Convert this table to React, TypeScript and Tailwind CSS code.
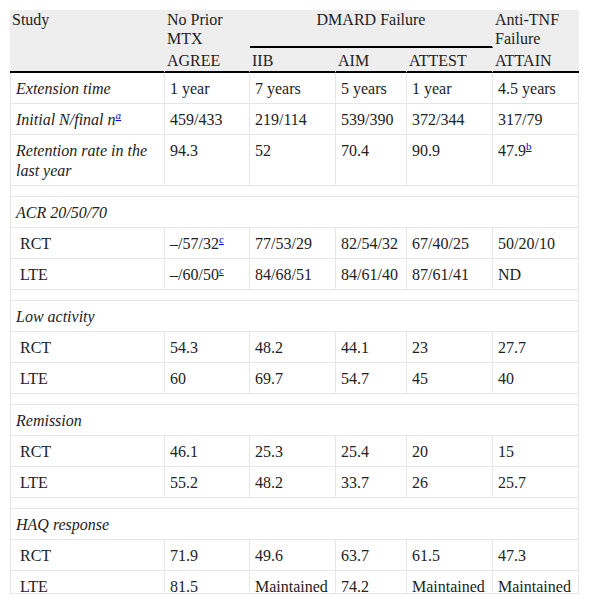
import React from "react";

type Row =
  | { kind: "data"; label: React.ReactNode; cells: React.ReactNode[]; sub?: boolean; italic?: boolean }
  | { kind: "group"; label: string }
  | { kind: "spacer" };

const Note = ({ t }: { t: string }) => (
  <sup>
    <a className="text-[11px] text-[#0000ee] underline">{t}</a>
  </sup>
);

const rows: Row[] = [
  { kind: "data", italic: true, label: "Extension time", cells: ["1 year", "7 years", "5 years", "1 year", "4.5 years"] },
  {
    kind: "data",
    italic: true,
    label: (
      <>
        Initial N/final n<Note t="a" />
      </>
    ),
    cells: ["459/433", "219/114", "539/390", "372/344", "317/79"],
  },
  {
    kind: "data",
    italic: true,
    label: "Retention rate in the last year",
    cells: [
      "94.3",
      "52",
      "70.4",
      "90.9",
      <>
        47.9<Note t="b" />
      </>,
    ],
  },
  { kind: "spacer" },
  { kind: "group", label: "ACR 20/50/70" },
  {
    kind: "data",
    sub: true,
    label: "RCT",
    cells: [
      <>
        –/57/32<Note t="c" />
      </>,
      "77/53/29",
      "82/54/32",
      "67/40/25",
      "50/20/10",
    ],
  },
  {
    kind: "data",
    sub: true,
    label: "LTE",
    cells: [
      <>
        –/60/50<Note t="c" />
      </>,
      "84/68/51",
      "84/61/40",
      "87/61/41",
      "ND",
    ],
  },
  { kind: "spacer" },
  { kind: "group", label: "Low activity" },
  { kind: "data", sub: true, label: "RCT", cells: ["54.3", "48.2", "44.1", "23", "27.7"] },
  { kind: "data", sub: true, label: "LTE", cells: ["60", "69.7", "54.7", "45", "40"] },
  { kind: "spacer" },
  { kind: "group", label: "Remission" },
  { kind: "data", sub: true, label: "RCT", cells: ["46.1", "25.3", "25.4", "20", "15"] },
  { kind: "data", sub: true, label: "LTE", cells: ["55.2", "48.2", "33.7", "26", "25.7"] },
  { kind: "spacer" },
  { kind: "group", label: "HAQ response" },
  { kind: "data", sub: true, label: "RCT", cells: ["71.9", "49.6", "63.7", "61.5", "47.3"] },
  { kind: "data", sub: true, label: "LTE", cells: ["81.5", "Maintained", "74.2", "Maintained", "Maintained"] },
];

export default function App() {
  return (
    <div className="h-[604px] w-[590px] bg-white pl-[10px] pt-[10px] font-['Liberation_Serif',serif] text-[16px] text-[#222]">
      <div className="h-[584px] w-[569px] overflow-hidden border-b border-[#e6e6e6]">
        <table className="w-[569px] table-fixed border-separate border-spacing-0 font-['Liberation_Serif',serif] text-[16px] text-[#222]">
          <colgroup>
            <col className="w-[155px]" />
            <col className="w-[85px]" />
            <col className="w-[86px]" />
            <col className="w-[71px]" />
            <col className="w-[86px]" />
            <col className="w-[86px]" />
          </colgroup>
          <thead>
            <tr className="bg-[#eeeeee] align-top leading-[19px]">
              <th rowSpan={2} className="border-r border-b-2 border-r-[#eeeeee] border-b-black px-[2px] pt-0 text-left font-normal">
                Study
              </th>
              <th className="border-r border-r-[#eeeeee] px-[2px] pt-0 text-left font-normal">No Prior MTX</th>
              <th colSpan={3} className="border-r border-b-2 border-r-[#eeeeee] border-b-black px-[2px] pt-0 text-center font-normal">
                DMARD Failure
              </th>
              <th className="px-[2px] pt-0 text-left font-normal">Anti-TNF Failure</th>
            </tr>
            <tr className="bg-[#eeeeee] align-top leading-[20px]">
              {["AGREE", "IIB", "AIM", "ATTEST", "ATTAIN"].map((h, i) => (
                <th
                  key={h}
                  className={`border-b-2 border-b-black px-[2px] pt-[3px] pb-0 text-left font-normal ${i < 4 ? "border-r border-r-[#eeeeee]" : ""}`}
                >
                  {h}
                </th>
              ))}
            </tr>
          </thead>
          <tbody className="leading-[20px]">
            {rows.map((r, i) => {
              if (r.kind === "spacer")
                return (
                  <tr key={i}>
                    <td colSpan={6} className="h-[11px] border-x border-b border-[#e6e6e6] p-0" />
                  </tr>
                );
              if (r.kind === "group")
                return (
                  <tr key={i}>
                    <td colSpan={6} className="border-x border-b border-[#e6e6e6] px-[5px] pt-[6px] pb-[4px] italic">
                      {r.label}
                    </td>
                  </tr>
                );
              return (
                <tr key={i} className="align-top">
                  <td
                    className={`border-x border-b border-[#e6e6e6] pt-[6px] pb-[4px] pr-[5px] ${r.sub ? "pl-[9px]" : "pl-[5px]"} ${r.italic ? "italic" : ""}`}
                  >
                    {r.label}
                  </td>
                  {r.cells.map((c, j) => (
                    <td key={j} className="whitespace-nowrap border-r border-b border-[#e6e6e6] px-[5px] pt-[6px] pb-[4px]">
                      {c}
                    </td>
                  ))}
                </tr>
              );
            })}
          </tbody>
        </table>
      </div>
    </div>
  );
}
